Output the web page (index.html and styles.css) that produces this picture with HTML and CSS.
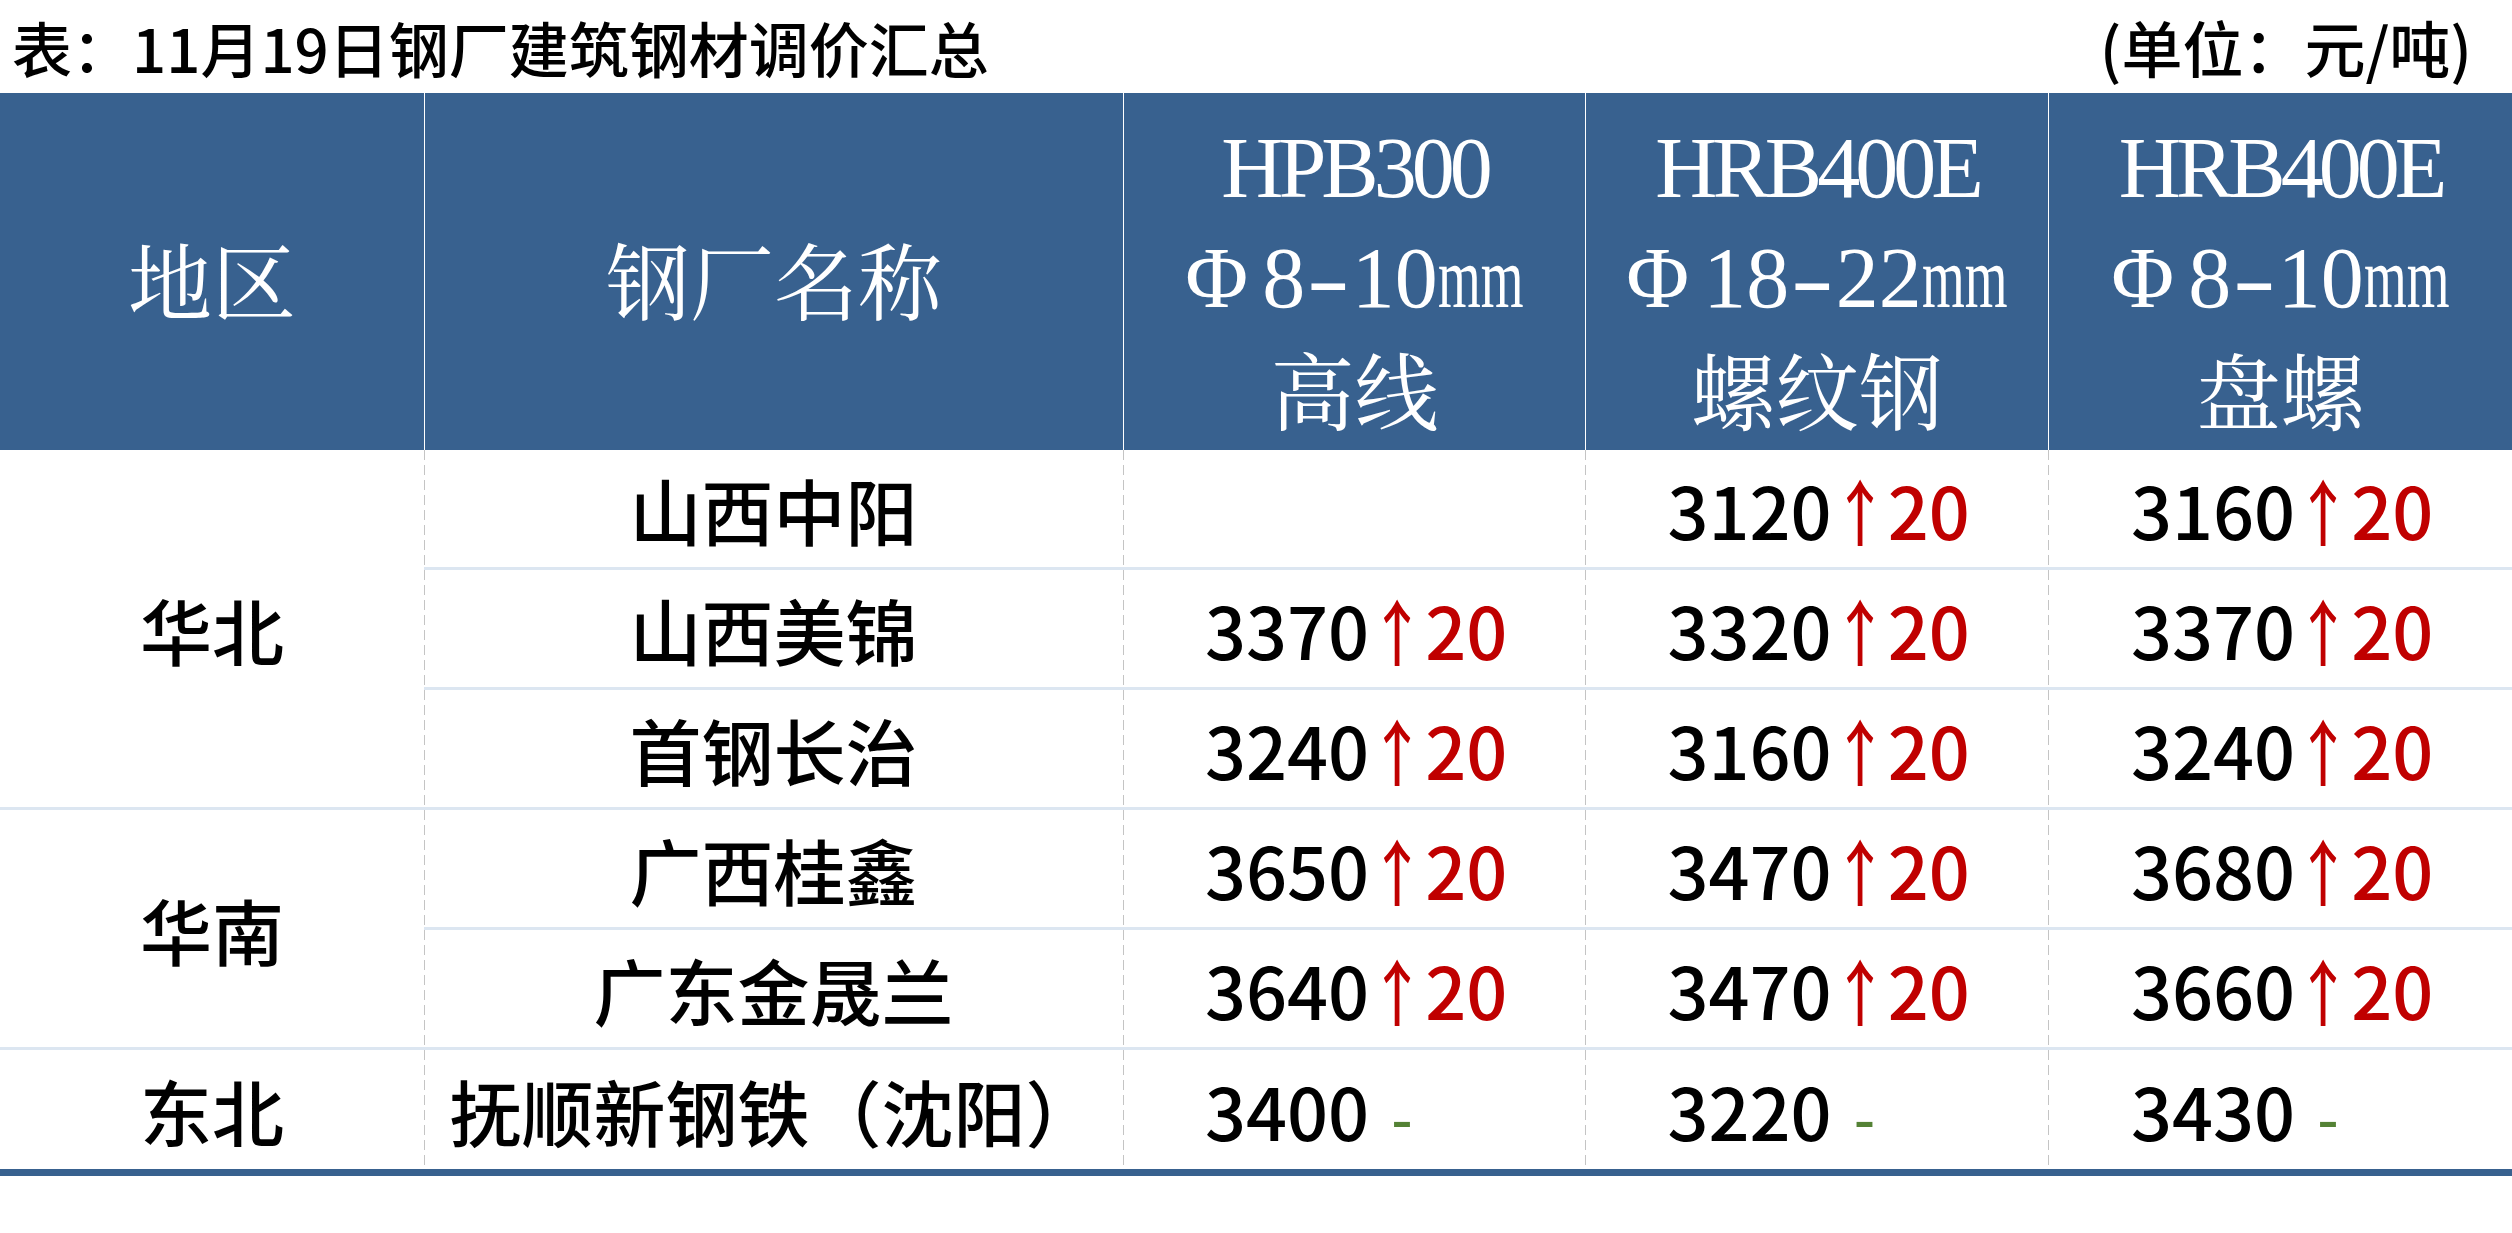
FILE: index.html
```html
<!DOCTYPE html>
<html lang="zh-CN">
<head>
<meta charset="utf-8">
<title>11月19日钢厂建筑钢材调价汇总</title>
<link rel="stylesheet" href="styles.css">
</head>
<body>
<div class="caption">
  <h1 class="title">表：11月19日钢厂建筑钢材调价汇总</h1>
  <span class="unit">(单位：元/吨)</span>
</div>
<div class="sheet">
  <div class="hd">地区</div>
  <div class="hd sep">钢厂名称</div>
  <div class="hd sep">
    <span class="en">HPB300</span>
    <span class="en dia"><span class="phi">Φ</span>8<span class="dash">-</span>10<span class="mm">mm</span></span>
    <span>高线</span>
  </div>
  <div class="hd sep">
    <span class="en">HRB400E</span>
    <span class="en dia"><span class="phi">Φ</span>18<span class="dash">-</span>22<span class="mm">mm</span></span>
    <span>螺纹钢</span>
  </div>
  <div class="hd sep">
    <span class="en">HRB400E</span>
    <span class="en dia"><span class="phi">Φ</span>8<span class="dash">-</span>10<span class="mm">mm</span></span>
    <span>盘螺</span>
  </div>

  <div class="rg span3">华北</div>
  <div class="mill">山西中阳</div>
  <div class="val"></div>
  <div class="val"><span class="p">3120<span class="up"><span class="arr">↑</span>20</span></span></div>
  <div class="val"><span class="p">3160<span class="up"><span class="arr">↑</span>20</span></span></div>

  <div class="mill">山西美锦</div>
  <div class="val"><span class="p">3370<span class="up"><span class="arr">↑</span>20</span></span></div>
  <div class="val"><span class="p">3320<span class="up"><span class="arr">↑</span>20</span></span></div>
  <div class="val"><span class="p">3370<span class="up"><span class="arr">↑</span>20</span></span></div>

  <div class="mill">首钢长治</div>
  <div class="val"><span class="p">3240<span class="up"><span class="arr">↑</span>20</span></span></div>
  <div class="val"><span class="p">3160<span class="up"><span class="arr">↑</span>20</span></span></div>
  <div class="val"><span class="p">3240<span class="up"><span class="arr">↑</span>20</span></span></div>

  <div class="rg span2">华南</div>
  <div class="mill">广西桂鑫</div>
  <div class="val"><span class="p">3650<span class="up"><span class="arr">↑</span>20</span></span></div>
  <div class="val"><span class="p">3470<span class="up"><span class="arr">↑</span>20</span></span></div>
  <div class="val"><span class="p">3680<span class="up"><span class="arr">↑</span>20</span></span></div>

  <div class="mill">广东金晟兰</div>
  <div class="val"><span class="p">3640<span class="up"><span class="arr">↑</span>20</span></span></div>
  <div class="val"><span class="p">3470<span class="up"><span class="arr">↑</span>20</span></span></div>
  <div class="val"><span class="p">3660<span class="up"><span class="arr">↑</span>20</span></span></div>

  <div class="rg last">东北</div>
  <div class="mill last">抚顺新钢铁（沈阳）</div>
  <div class="val last"><span class="p">3400<span class="flat">-</span></span></div>
  <div class="val last"><span class="p">3220<span class="flat">-</span></span></div>
  <div class="val last"><span class="p">3430<span class="flat">-</span></span></div>
</div>
</body>
</html>
```

FILE: styles.css
```css
* {
  box-sizing: border-box;
  margin: 0;
  padding: 0;
}

html,
body {
  background: #ffffff;
}

body {
  width: 2512px;
  font-family: "Noto Sans CJK SC Medium", "Noto Sans CJK SC", "Noto Sans", sans-serif;
  font-weight: 500;
  color: #000000;
}

.caption {
  height: 93px;
  display: flex;
  align-items: center;
  justify-content: space-between;
  padding: 0 40px 0 12px;
}

.title {
  font-size: 60px;
  font-weight: 500;
  line-height: 1;
}

.unit {
  font-size: 61px;
  line-height: 1;
}

.sheet {
  display: grid;
  grid-template-columns: 424px 699px 462px 463px 464px;
  grid-template-rows: 357px repeat(5, 120px) 119px;
  border-bottom: 7px solid #38618f;
}

.hd {
  background: #38618f;
  color: #ffffff;
  font-family: "Noto Serif CJK SC", "Source Han Serif SC", "AR PL UMing CN", "Liberation Serif", serif;
  font-weight: 400;
  font-size: 84px;
  line-height: 110px;
  display: flex;
  flex-direction: column;
  align-items: center;
  justify-content: center;
  padding-top: 12px;
}

.hd.sep {
  border-left: 1px solid #ffffff;
}

.en {
  font-family: "Liberation Serif", serif;
  font-size: 86px;
  letter-spacing: -5px;
  white-space: nowrap;
}

.en.dia {
  letter-spacing: 0;
}

.phi {
  margin-right: 14px;
}

.dash {
  display: inline-block;
  transform: scaleX(1.5);
  margin: 0 9px;
}

.mm {
  display: inline-block;
  transform: scaleX(0.64);
  transform-origin: left center;
  margin-right: -48px;
}

.rg,
.mill,
.val {
  display: flex;
  align-items: center;
  justify-content: center;
  font-size: 72px;
  line-height: 1;
  border-bottom: 3px solid #dce6f1;
}

.rg.span3 {
  grid-row: span 3;
}

.rg.span2 {
  grid-row: span 2;
}

.mill,
.val {
  background-image: linear-gradient(#c4c4c4 0 10px, transparent 10px 15px);
  background-size: 1px 15px;
  background-repeat: repeat-y;
  background-position: left top;
}

.last {
  border-bottom: none;
}

.p {
  width: 298px;
  display: flex;
  align-items: baseline;
  white-space: nowrap;
}

.up {
  color: #c00000;
  display: flex;
  align-items: baseline;
}

.arr {
  display: inline-block;
  width: 72px;
  transform: scaleX(0.78);
  margin: 0 -8px;
}

.flat {
  color: #548235;
  font-weight: 700;
  font-size: 60px;
  margin-left: 22px;
}
```
